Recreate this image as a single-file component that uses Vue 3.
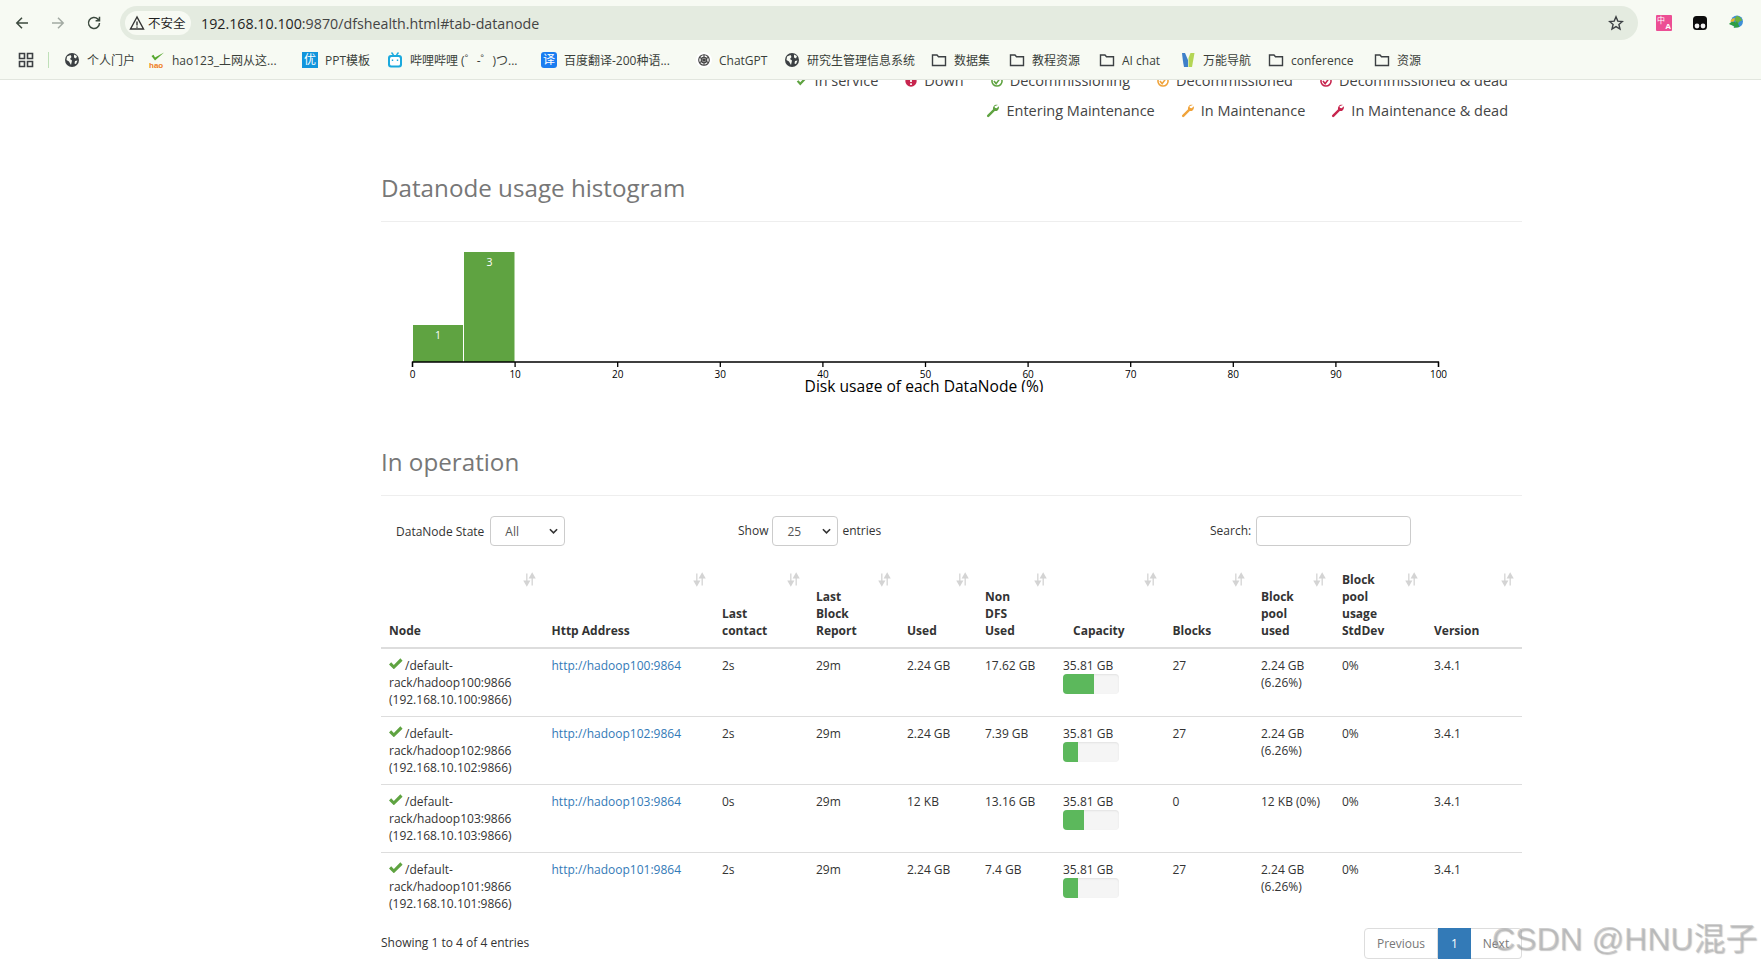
<script setup>
const bookmarks = [
  { icon: 'globe', text: '个人门户', width: 85 },
  { icon: 'hao', text: 'hao123_上网从这...', width: 153 },
  { icon: 'you', text: 'PPT模板', width: 85 },
  { icon: 'bili', text: '哔哩哔哩 (゜-゜)つ...', width: 154 },
  { icon: 'yi', text: '百度翻译-200种语...', width: 155 },
  { icon: 'gpt', text: 'ChatGPT', width: 88 },
  { icon: 'globe', text: '研究生管理信息系统', width: 147 },
  { icon: 'folder', text: '数据集', width: 78 },
  { icon: 'folder', text: '教程资源', width: 90 },
  { icon: 'folder', text: 'AI chat', width: 81 },
  { icon: 'wn', text: '万能导航', width: 88 },
  { icon: 'folder', text: 'conference', width: 106 },
  { icon: 'folder', text: '资源', width: 60 }
]
const headers = [
  { label: 'Node' },
  { label: 'Http Address' },
  { label: 'Last contact' },
  { label: 'Last Block Report' },
  { label: 'Used' },
  { label: 'Non DFS Used' },
  { label: 'Capacity', extra: 'cap-head' },
  { label: 'Blocks' },
  { label: 'Block pool used' },
  { label: 'Block pool usage StdDev' },
  { label: 'Version' }
]
const rows = [
  { host: '100', contact: '2s', used: '2.24 GB', non: '17.62 GB', pct: 55.5, blocks: '27', pool: '2.24 GB (6.26%)' },
  { host: '102', contact: '2s', used: '2.24 GB', non: '7.39 GB', pct: 27, blocks: '27', pool: '2.24 GB (6.26%)' },
  { host: '103', contact: '0s', used: '12 KB', non: '13.16 GB', pct: 36.8, blocks: '0', pool: '12 KB (0%)' },
  { host: '101', contact: '2s', used: '2.24 GB', non: '7.4 GB', pct: 26.9, blocks: '27', pool: '2.24 GB (6.26%)' }
]
const ticks = Array.from({ length: 11 }, (_, i) => i * 10)
const tickX = t => 31.5 + t * 10.26
const legend1 = [
  { k: 'ok', c: '#5fa341', t: 'In service' },
  { k: 'down', c: '#c7254e', t: 'Down' },
  { k: 'dec', c: '#5fa341', t: 'Decommissioning' },
  { k: 'dec', c: '#f0a33a', t: 'Decommissioned' },
  { k: 'dec', c: '#c7254e', t: 'Decommissioned & dead' }
]
const legend2 = [
  { c: '#5fa341', t: 'Entering Maintenance' },
  { c: '#f0a33a', t: 'In Maintenance' },
  { c: '#c7254e', t: 'In Maintenance & dead' }
]
const wrench = 'M13.6 1.2c-1.7-.6-3.7-.1-4.8 1.3-.8 1-1 2.300-.7 3.500L1.500 12.700c-.6.6-.6 1.500 0 2 .6.6 1.400.5 2-.1l6.500-6.600c1.200.3 2.500 0 3.500-.9 1.200-1.100 1.600-2.800 1.100-4.400l-2.400 2.200-2-.5-.5-1.900z'
</script>

<template>
  <div class="page">
    <header class="browser">
      <div class="toolbar">
        <svg class="nav" viewBox="0 0 16 16"><path d="M14 8H3M8 2.800 2.800 8 8 13.200" /></svg>
        <svg class="nav faded" viewBox="0 0 16 16"><path d="M2 8h11M8 2.800 13.200 8 8 13.200" /></svg>
        <svg class="nav" viewBox="0 0 16 16"><path d="M13.500 8a5.500 5.500 0 1 1-1.600-3.900L13.500 5.700M13.500 1.800v3.900H9.600" /></svg>
        <div class="omnibox">
          <span class="chip">
            <svg viewBox="0 0 16 16" class="warn"><path d="M8 2 1.500 14h13z" /><path d="M8 6.500v4M8 11.500v1.300" /></svg>
            不安全
          </span>
          <span class="url">192.168.10.100<span class="url-rest">:9870/dfshealth.html#tab-datanode</span></span>
          <svg class="star" viewBox="0 0 16 16"><path d="m8 1.800 1.800 4.300 4.600.4-3.500 3 1.100 4.500L8 11.600 4 14l1.100-4.500-3.500-3 4.600-.4z" /></svg>
        </div>
        <div class="ext">
          <span class="ext-translate"><span class="tr-a">中</span><span class="tr-b">A</span></span>
          <svg class="ext-icon" viewBox="0 0 16 16"><rect x="1" y="1" width="14" height="14" rx="3.500" fill="#0c0c0c" /><circle cx="5" cy="11" r="2.400" fill="#f2f2f2" /><circle cx="11" cy="11" r="2.400" fill="#f2f2f2" /></svg>
          <svg class="ext-icon" viewBox="0 0 16 16"><circle cx="9" cy="6.500" r="6" fill="#3f8fd6" /><path d="M9 .8c2.500.6 4.500 2.500 5 4.700-2 .3-3.500 1.500-4 3.500-2-1-3-2.500-3-4.500S8 1.800 9 .8z" fill="#6db33f" /><path d="M1 9c2-2.500 5-3 7-1.500l1-1.500 2.500 6-6 1 1-1.500C5 10.500 3 10 1 9z" fill="#2f9e44" /><path d="M2.200 6.500C3 4.500 5 3 6.500 3c.5 1.500 0 3-1 3.800-1.200 0-2.300-.1-3.300-.3z" fill="#f0b429" /></svg>
        </div>
      </div>
      <nav class="bookmarks">
        <svg class="apps" viewBox="0 0 16 16"><path d="M1.500 1.500h5v5h-5zM9.500 1.500h5v5h-5zM1.500 9.500h5v5h-5zM9.500 9.500h5v5h-5z" /></svg>
        <span class="sep"></span>
        <div v-for="b in bookmarks" :key="b.text" class="bm" :style="{ width: b.width + 'px' }">
          <svg v-if="b.icon === 'globe'" class="bi" viewBox="0 0 16 16"><circle cx="8" cy="8" r="7" fill="#3c4043" /><path d="M3 4.500 6.500 3l1 2-1.500 2 2 1.500L7 13 5 9.500 2.500 8zM10 2.500l3 1.500-1 2.500-2-1zM11 9l2.500-.5-1.500 3.500-1.500-.5z" fill="#f7faf3" /></svg>
          <svg v-else-if="b.icon === 'hao'" class="bi" viewBox="0 0 16 16"><path d="M2.500 4 6 8.500 15 .5 6 5.500 4.500 2.800z" fill="#56a82e" /><text x="0" y="15.500" class="hao">hao</text></svg>
          <span v-else-if="b.icon === 'you'" class="sq sq-you">优</span>
          <svg v-else-if="b.icon === 'bili'" class="bi" viewBox="0 0 16 16"><path d="M4.500 .5 6.500 3M11.500 .5 9.500 3" stroke="#1ba9dd" stroke-width="1.400" /><rect x="1" y="3" width="14" height="12.500" rx="3" fill="#1ba9dd" /><rect x="3" y="5" width="10" height="8.500" rx="1.500" fill="#fff" /><path d="M5.500 7.500v1.500M10.500 7.500v1.500" stroke="#1ba9dd" stroke-width="1.400" /></svg>
          <span v-else-if="b.icon === 'yi'" class="sq sq-yi">译</span>
          <svg v-else-if="b.icon === 'gpt'" class="bi" viewBox="0 0 16 16"><circle cx="8" cy="8" r="8" fill="#fff" /><g fill="none" stroke="#444" stroke-width="1.100"><circle cx="8" cy="8" r="5.300" /><circle cx="8" cy="8" r="2.800" /><path d="M8 2.700V8M3.400 5.300 8 8M3.400 10.700 8 8M8 13.300V8M12.600 10.700 8 8M12.600 5.300 8 8" /></g></svg>
          <svg v-else-if="b.icon === 'wn'" class="bi" viewBox="0 0 16 16"><path d="M2 1h3l3 7v7H4C3 10 2.500 6 2 1z" fill="#3f80c9" /><path d="M14.500 1h-4L8.500 6v9H12z" fill="#b4d655" /></svg>
          <svg v-else class="bi folder" viewBox="0 0 16 16"><path d="M1.500 3h4.500l1.500 1.800h7v8.700h-13z" /></svg>
          <span class="bm-text">{{ b.text }}</span>
        </div>
      </nav>
    </header>

    <main class="content">
      <div class="legend legend-clip">
        <span v-for="l in legend1" :key="l.t" class="leg">
          <svg v-if="l.k === 'ok'" class="leg-ic" viewBox="0 0 16 16"><path d="M2 8.500 6 13 14.500 4 12.500 2.500 6 9.500 4 7z" :fill="l.c" /></svg>
          <svg v-else-if="l.k === 'down'" class="leg-ic" viewBox="0 0 16 16"><circle cx="8" cy="8" r="6.500" :fill="l.c" /><path d="M7 4h2v5H7zM7 10.500h2v2H7z" fill="#fff" /></svg>
          <svg v-else class="leg-ic" viewBox="0 0 16 16"><circle cx="8" cy="8" r="5.800" fill="none" :stroke="l.c" stroke-width="1.800" /><path d="M4.500 8 7 11 11.500 5" fill="none" :stroke="l.c" stroke-width="1.800" /></svg>
          {{ l.t }}
        </span>
      </div>
      <div class="legend legend-second">
        <span v-for="l in legend2" :key="l.t" class="leg">
          <svg class="leg-ic" viewBox="0 0 16 16"><path :d="wrench" :fill="l.c" /></svg>
          {{ l.t }}
        </span>
      </div>

      <h2 class="section first">Datanode usage histogram</h2>
      <svg class="hist" width="1140" height="170" viewBox="0 0 1140 170">
        <rect x="32" y="103" width="50" height="37" class="bar" />
        <rect x="83" y="30" width="50.500" height="110" class="bar" />
        <text x="57" y="117" class="barlabel">1</text>
        <text x="108.500" y="44" class="barlabel">3</text>
        <path d="M31.500 145V140H1057.500V145" class="axis" />
        <g v-for="t in ticks" :key="t">
          <path :d="`M${tickX(t)} 140v5`" class="axis" />
          <text :x="tickX(t)" y="156" class="tick">{{ t }}</text>
        </g>
        <text x="543" y="170" class="xlabel">Disk usage of each DataNode (%)</text>
      </svg>

      <h2 class="section second">In operation</h2>

      <div class="filters">
        <label class="state">DataNode State
          <span class="fake-select state-sel">All
            <svg viewBox="0 0 10 6" class="caret"><path d="M1 1l4 4 4-4" /></svg>
          </span>
        </label>
        <label class="show"><span>Show</span>
          <span class="fake-select show-sel">25
            <svg viewBox="0 0 10 6" class="caret"><path d="M1 1l4 4 4-4" /></svg>
          </span>
          <span>entries</span>
        </label>
        <label class="search"><span>Search:</span><span class="search-input"></span></label>
      </div>

      <table class="nodes">
        <colgroup>
          <col class="c1" /><col class="c2" /><col class="c3" /><col class="c4" /><col class="c5" /><col class="c6" /><col class="c7" /><col class="c8" /><col class="c9" /><col class="c10" /><col class="c11" />
        </colgroup>
        <thead>
          <tr>
            <th v-for="h in headers" :key="h.label" :class="h.extra">
              {{ h.label }}
              <svg class="sort" viewBox="0 0 12 14"><path d="M3.500 1.500v9M1.200 8.500l2.300 4 2.300-4zM8.500 12.500v-9M6.200 5.500l2.300-4 2.300 4z" /></svg>
            </th>
          </tr>
        </thead>
        <tbody>
          <tr v-for="r in rows" :key="r.host">
            <td><svg class="okmark" viewBox="0 0 16 13"><path d="M0 7.300 2.500 4.800 5.500 7.800 13 .3 15.500 3 5.500 12.800z" /></svg> /default-rack/hadoop{{ r.host }}:9866 (192.168.10.{{ r.host }}:9866)</td>
            <td><a class="link">http://hadoop{{ r.host }}:9864</a></td>
            <td>{{ r.contact }}</td>
            <td>29m</td>
            <td>{{ r.used }}</td>
            <td>{{ r.non }}</td>
            <td>35.81 GB
              <div class="progress"><div class="fill" :style="{ width: r.pct + '%' }"></div></div>
            </td>
            <td>{{ r.blocks }}</td>
            <td>{{ r.pool }}</td>
            <td>0%</td>
            <td>3.4.1</td>
          </tr>
        </tbody>
      </table>

      <div class="footer">
        <span class="info">Showing 1 to 4 of 4 entries</span>
        <div class="pager">
          <span class="pg prev">Previous</span>
          <span class="pg active">1</span>
          <span class="pg next">Next</span>
        </div>
      </div>
    </main>
    <div class="watermark">CSDN @HNU混子</div>
  </div>
</template>

<style>
html, body { margin: 0; background: #fff; overflow: hidden; }
</style>

<style scoped>
.page {
  position: relative;
  width: 1761px;
  height: 969px;
  overflow: hidden;
  font-family: "Open Sans", "Noto Sans CJK SC", sans-serif;
  font-size: 12px;
  line-height: 17px;
  color: #333;
}
.browser { height: 79px; background: #f7faf3; border-bottom: 1px solid #e2e6de; box-sizing: content-box; position: relative; z-index: 2; }
.toolbar { height: 46px; display: flex; align-items: center; padding: 0 0 0 14px; box-sizing: border-box; }
.nav { width: 16px; height: 16px; margin-right: 20px; flex: none; fill: none; stroke: #3c4a3e; stroke-width: 1.500; }
.nav.faded { stroke: #a3aaa3; }
.omnibox { flex: none; width: 1518px; margin-left: -2px; height: 34px; border-radius: 17px; background: #e4ebe0; display: flex; align-items: center; padding: 0 14px 0 5px; box-sizing: border-box; }
.chip { height: 24px; padding: 0 4px 0 4px; width: 66px; box-sizing: border-box; background: #f7faf3; border-radius: 12px; display: flex; align-items: center; gap: 3px; font-size: 12.500px; color: #1f1f1f; white-space: nowrap; }
.warn { width: 16px; height: 16px; fill: none; stroke: #333; stroke-width: 1.400; flex: none; }
.url { margin-left: 10px; font-family: "Open Sans", sans-serif; font-size: 14.250px; color: #1f1f1f; flex: 1; }
.url-rest { color: #444; }
.star { width: 16px; height: 16px; margin-left: -2px; fill: none; stroke: #3c4043; stroke-width: 1.400; }
.ext { margin-left: 18px; display: flex; align-items: center; gap: 20px; }
.ext-translate { position: relative; width: 16px; height: 16px; background: #ec4e94; color: #fff; border-radius: 1px; overflow: hidden; }
.tr-a { position: absolute; left: 1px; top: 0; font-size: 8px; line-height: 9px; }
.tr-b { position: absolute; right: 1px; bottom: 0; font-size: 8px; line-height: 9px; font-weight: 700; font-family: "Liberation Sans", sans-serif; }
.ext-icon { width: 16px; height: 16px; }
.bookmarks { height: 28px; display: flex; align-items: center; padding-left: 18px; color: #333; }
.apps { width: 16px; height: 16px; fill: none; stroke: #3c4043; stroke-width: 1.600; flex: none; }
.sep { width: 1px; height: 16px; background: #bfe0b8; margin: 0 15px 0 14px; flex: none; }
.bm { display: flex; align-items: center; gap: 7px; flex: none; white-space: nowrap; overflow: hidden; font-size: 12px; }
.bi { width: 16px; height: 16px; flex: none; }
.bm-text { color: #3a3f3a; }
.folder { fill: none; stroke: #3c4043; stroke-width: 1.400; }
.hao { font-size: 8px; font-weight: 700; fill: #ef7d21; font-family: "Liberation Sans", sans-serif; }
.sq { width: 16px; height: 16px; flex: none; color: #fff; font-size: 12px; line-height: 16px; text-align: center; }
.sq-you { background: #1295dc; }
.sq-yi { background: #1a7df0; border-radius: 3px; }

.content { width: 1141px; margin-left: 381px; margin-top: -9px; position: relative; }
.legend { display: flex; justify-content: flex-end; font-size: 14.500px; line-height: 20px; padding-right: 14px; color: #444; }
.legend-clip { height: 20px; gap: 26px; }
.legend-second { margin-top: 10px; gap: 26px; }
.leg { display: inline-flex; align-items: center; gap: 6px; white-space: nowrap; }
.leg-ic { width: 14px; height: 14px; flex: none; }

.section { margin: 0; font-weight: 400; font-size: 24.200px; line-height: 32px; color: #777; padding-bottom: 17px; border-bottom: 1px solid #eee; }
.section.first { margin-top: 51px; }
.section.second { margin-top: 54px; }
.hist { display: block; font-family: "Open Sans", sans-serif; overflow: hidden; }
.bar { fill: #5fa341; }
.barlabel { fill: #fff; font-size: 10.500px; text-anchor: middle; }
.axis { fill: none; stroke: #000; stroke-width: 1.300; }
.tick { font-size: 10px; text-anchor: middle; fill: #000; }
.xlabel { font-size: 15.600px; text-anchor: middle; fill: #000; }

.filters { position: relative; height: 30px; margin-top: 20px; display: flex; align-items: center; }
.filters label { display: flex; align-items: center; gap: 4px; }
.state { margin-left: 15px; width: 342px; flex: none; gap: 6px !important; }
.show { width: 456px; flex: none; }
.show > span:first-child, .show > span:last-child, .search > span:first-child { margin-top: -2px; }
.search { flex: none; gap: 5px !important; margin-left: 16px; }
.fake-select { height: 30px; box-sizing: border-box; border: 1px solid #ccc; border-radius: 4px; display: flex; align-items: center; justify-content: space-between; background: #fff; color: #555; padding: 0 6px 0 14px; }
.state-sel { width: 75px; }
.show-sel { width: 66px; }
.caret { width: 9px; height: 6px; fill: none; stroke: #333; stroke-width: 1.800; }
.search-input { width: 155px; height: 30px; box-sizing: border-box; border: 1px solid #ccc; border-radius: 4px; display: block; }

.nodes { width: 1141px; table-layout: fixed; border-collapse: collapse; margin-top: 17px; }
.c1 { width: 162.500px; } .c2 { width: 170.500px; } .c3 { width: 94px; } .c4 { width: 91px; } .c5 { width: 78px; } .c6 { width: 78px; } .c7 { width: 109.500px; } .c8 { width: 88.500px; } .c9 { width: 81px; } .c10 { width: 92px; } .c11 { width: 96px; }
th { position: relative; text-align: left; vertical-align: bottom; padding: 8px 30px 8px 8px; font-weight: 700; border-bottom: 2px solid #ddd; color: #333; }
th.cap-head { padding-left: 18px; }
.sort { position: absolute; top: 9px; right: 8px; width: 13px; height: 15px; fill: #d4d4d4; stroke: #d4d4d4; stroke-width: 1.200; }
td { vertical-align: top; padding: 8px; border-top: 1px solid #ddd; }
tbody tr:first-child td { border-top: 0; }
.okmark { width: 14px; height: 11.500px; fill: #5fa341; vertical-align: 1px; margin-right: -1px; }
.link { color: #337ab7; }
.progress { width: 56px; height: 20px; background: #f5f5f5; border-radius: 4px; overflow: hidden; box-shadow: inset 0 1px 2px rgba(0,0,0,.08); }
.fill { height: 100%; background: #5cb85c; }

.footer { display: flex; justify-content: space-between; align-items: flex-start; padding-top: 5px; }
.info { margin-top: 9px; }
.pager { display: flex; height: 31px; margin-top: 3px; }
.pg { box-sizing: border-box; height: 31px; display: flex; align-items: center; justify-content: center; color: #777; border: 1px solid #ddd; background: #fff; }
.prev { width: 74px; border-radius: 4px 0 0 4px; }
.active { width: 33px; background: #337ab7; border-color: #337ab7; color: #fff; }
.next { width: 51px; border-left: 0; border-radius: 0 4px 4px 0; }

.watermark { position: absolute; left: 1492px; top: 920px; font-family: "Liberation Sans", "Noto Sans CJK SC", sans-serif; font-size: 32px; line-height: 38px; color: rgba(170,170,170,.55); text-shadow: 1px 1px 1px rgba(120,120,120,.4); white-space: nowrap; z-index: 3; }
</style>
